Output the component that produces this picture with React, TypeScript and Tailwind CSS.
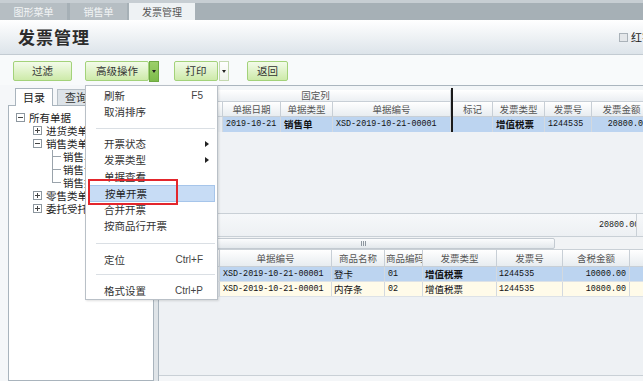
import React from "react";

const CJK = "font-['Noto_Sans_CJK_SC',sans-serif]";
const MONO = "font-['Liberation_Mono',monospace] text-[8.4px]";
const TXT = "text-[9.5px]";

function TreeBox({ plus }: { plus?: boolean }) {
  return (
    <span className="relative inline-flex w-[9px] h-[9px] shrink-0 border border-[#8d979f] bg-white items-center justify-center">
      <span className="w-[5px] h-px bg-[#444]" />
      {plus && <span className="absolute left-[3px] top-[1px] w-px h-[5px] bg-[#444]" />}
    </span>
  );
}

function Btn({ label, w }: { label: string; w: string }) {
  return (
    <div
      className={`${w} h-[20px] flex items-center justify-center border border-[#a3d27a] bg-gradient-to-b from-[#f3fbe9] to-[#cdeaa9] text-[10.5px] text-[#333] rounded-[2px]`}
    >
      {label}
    </div>
  );
}

function MenuItem({
  label,
  right,
  arrow,
  h = "h-[16px]",
}: {
  label: string;
  right?: string;
  arrow?: boolean;
  h?: string;
}) {
  return (
    <div className={`${h} flex items-center pl-[18px] pr-[14px] text-[10.5px] text-[#333]`}>
      <span className="flex-1">{label}</span>
      {right && <span className="font-['Liberation_Sans',sans-serif] text-[10px] text-[#444]">{right}</span>}
      {arrow && (
        <span className="mr-[-6px] w-0 h-0 border-y-[3px] border-y-transparent border-l-[4px] border-l-[#222]" />
      )}
    </div>
  );
}

function Sep({ h }: { h: string }) {
  return (
    <div className={`${h} flex items-center pl-[10px] pr-[2px]`}>
      <div className="h-px w-full bg-[#dadfe4]" />
    </div>
  );
}

const HC =
  "h-full flex items-center justify-center border-r border-b border-[#c8cfd6] text-[9.5px] text-[#555] whitespace-nowrap overflow-hidden";
const DC = "h-full flex items-center border-r border-[#d3d9df] text-[#111] whitespace-nowrap overflow-hidden";

export default function App() {
  return (
    <div className={`relative w-[643px] h-[381px] overflow-hidden bg-[#f5f7f9] ${CJK}`}>
      {/* top tab bar */}
      <div className="h-[20px] flex items-end bg-[#a6b0b6] border-t-[3px] border-[#c7ced3]">
        <div className="w-[67px] h-[17px] flex items-center justify-center bg-[#b6bec3] text-[10px] text-[#f2f4f5]">
          图形菜单
        </div>
        <div className="w-[57px] h-[17px] ml-[3px] flex items-center justify-center bg-[#b6bec3] text-[10px] text-[#f2f4f5]">
          销售单
        </div>
        <div className="w-[66px] h-[17px] ml-[2px] flex items-center justify-center bg-[#eef2f4] text-[10px] text-[#555]">
          发票管理
        </div>
      </div>

      {/* header */}
      <div className="h-[35px] flex items-center bg-gradient-to-b from-[#ffffff] to-[#dde4ea] border-b border-[#c3cbd2] pl-[18px]">
        <div className="flex-1 text-[17px] font-bold text-[#2d2d2d] tracking-[1px]">发票管理</div>
        <div className="flex items-center gap-[3px] mr-[-10px]">
          <span className="w-[9px] h-[9px] border border-[#aab2b9] bg-[#e4e7ea]" />
          <span className="text-[11px] text-[#222]">红字</span>
        </div>
      </div>

      {/* toolbar */}
      <div className="h-[30px] flex items-start pt-[6px] pl-[13px] bg-[#f8fafb]">
        <Btn label="过滤" w="w-[59px]" />
        <div className="ml-[13px] flex">
          <Btn label="高级操作" w="w-[64px]" />
          <div className="w-[10px] h-[21px] flex items-center justify-center bg-gradient-to-b from-[#9ccf6b] to-[#7dbb4a] border border-[#6ea942]">
            <span className="w-0 h-0 border-x-[2.5px] border-x-transparent border-t-[3px] border-t-[#222]" />
          </div>
        </div>
        <div className="ml-[15px] flex">
          <Btn label="打印" w="w-[44px]" />
          <div className="w-[10px] h-[20px] ml-[1px] flex items-center justify-center bg-gradient-to-b from-[#ffffff] to-[#eef3ea] border border-[#c4d9b0]">
            <span className="w-0 h-0 border-x-[2.5px] border-x-transparent border-t-[3px] border-t-[#222]" />
          </div>
        </div>
        <div className="ml-[18px]">
          <Btn label="返回" w="w-[41px]" />
        </div>
      </div>

      {/* main */}
      <div className="h-[296px] flex pl-[8px]">
        {/* left panel */}
        <div className="w-[146px] flex flex-col pt-[2px]">
          <div className="h-[18px] flex items-end pl-[7px]">
            <div className="w-[38px] h-[18px] flex items-center justify-center bg-white border-t border-x border-[#a9b4bd] text-[11px] text-[#222] mb-[-1px] z-10">
              目录
            </div>
            <div className="w-[38px] h-[16px] ml-[4px] flex items-center justify-center bg-[#dde3e8] border-t border-x border-[#b7c0c7] text-[11px] text-[#333]">
              查询
            </div>
          </div>
          <div className="flex-1 bg-white border border-[#a9b4bd] pt-[5px] text-[10.5px] text-[#222]">
            <div className="h-[13px] flex items-center pl-[7px] gap-[4px]">
              <TreeBox />
              <span>所有单据</span>
            </div>
            <div className="h-[13px] flex items-center pl-[24px] gap-[4px]">
              <TreeBox plus />
              <span>进货类单</span>
            </div>
            <div className="h-[13px] flex items-center pl-[24px] gap-[4px]">
              <TreeBox />
              <span>销售类单</span>
            </div>
            {["销售单", "销售订单", "销售报价单"].map((t, i) => (
              <div key={t} className="h-[13px] flex items-center pl-[43px]">
                <span className="relative w-[10px] h-full">
                  <span className={`absolute left-0 top-0 w-px bg-[#9aa3ab] ${i === 2 ? "h-[7px]" : "h-full"}`} />
                  <span className="absolute left-0 top-[6px] w-[9px] h-px bg-[#9aa3ab]" />
                </span>
                <span className="ml-[1px]">{t}</span>
              </div>
            ))}
            <div className="h-[13px] flex items-center pl-[24px] gap-[4px]">
              <TreeBox plus />
              <span>零售类单</span>
            </div>
            <div className="h-[13px] flex items-center pl-[24px] gap-[4px]">
              <TreeBox plus />
              <span>委托受托单</span>
            </div>
          </div>
        </div>

        {/* splitter */}
        <div className="w-[4px] bg-[#dfe4e8]" />

        {/* right grids */}
        <div className="flex-1 flex flex-col bg-[#eef1f4] border-l border-t border-[#aab5be] overflow-hidden">
          {/* top grid */}
          <div className="flex">
            <div className="w-[292px] shrink-0 flex flex-col">
              <div className="h-[4px] bg-[#f3f6f8]" />
              <div className="h-[12px] flex bg-gradient-to-b from-[#ffffff] to-[#eaeef2]">
                <div className={`${HC} w-[22px]`} />
                <div className={`${HC} w-[270px]`}>固定列</div>
              </div>
              <div className="h-[15px] flex bg-gradient-to-b from-[#ffffff] to-[#e6ebef]">
                <div className={`${HC} w-[22px]`} />
                <div className={`${HC} w-[42px]`} />
                <div className={`${HC} w-[58px]`}>单据日期</div>
                <div className={`${HC} w-[52px]`}>单据类型</div>
                <div className={`${HC} w-[118px]`}>单据编号</div>
              </div>
              <div className="h-[15px] flex">
                <div className={`${DC} w-[64px] bg-[#e9edf1]`} />
                <div className={`${DC} w-[58px] bg-[#bcd4f0] pl-[3px] ${MONO}`}>2019-10-21</div>
                <div className={`${DC} w-[52px] bg-[#bcd4f0] pl-[3px] font-bold ${TXT}`}>销售单</div>
                <div className={`${DC} w-[118px] bg-[#bcd4f0] pl-[3px] ${MONO}`}>XSD-2019-10-21-00001</div>
              </div>
            </div>
            <div className="w-[2px] shrink-0 mt-[2px] h-[44px] bg-[#1a1a1a]" />
            <div className="w-[220px] shrink-0 flex flex-col">
              <div className="h-[4px] bg-[#f3f6f8]" />
              <div className="h-[12px] bg-gradient-to-b from-[#ffffff] to-[#eaeef2] border-b border-[#c8cfd6]" />
              <div className="h-[15px] flex bg-gradient-to-b from-[#ffffff] to-[#e6ebef]">
                <div className={`${HC} w-[40px]`}>标记</div>
                <div className={`${HC} w-[52px]`}>发票类型</div>
                <div className={`${HC} w-[47px]`}>发票号</div>
                <div className={`${HC} w-[60px]`}>发票金额</div>
                <div className={`${HC} w-[21px]`} />
              </div>
              <div className="h-[15px] flex bg-[#bcd4f0]">
                <div className={`${DC} w-[40px]`} />
                <div className={`${DC} w-[52px] pl-[3px] font-bold ${TXT}`}>增值税票</div>
                <div className={`${DC} w-[47px] pl-[3px] ${MONO}`}>1244535</div>
                <div className={`${DC} w-[60px] justify-end pr-[3px] ${MONO}`}>20800.00</div>
                <div className={`${DC} w-[21px]`} />
              </div>
            </div>
          </div>
          <div className="h-[81px] bg-[#eff2f5]" />

          {/* summary */}
          <div className="h-[24px] flex items-center bg-gradient-to-b from-[#f6f8fa] to-[#edf0f3] border-y border-[#c9d0d6]">
            <div className="w-[440px] shrink-0" />
            <div className={`w-[38px] shrink-0 h-full flex items-center overflow-hidden whitespace-nowrap border-r border-[#c9d0d6] text-[#222] ${MONO}`}>
              20800.00
            </div>
          </div>

          {/* scrollbar */}
          <div className="h-[13px] flex items-center bg-[#f1f3f5] border-b border-[#c9d0d6]">
            <div className="ml-[12px] w-[384px] h-[11px] flex items-center justify-center rounded-[2px] border border-[#c3cad1] bg-gradient-to-b from-[#fbfcfd] to-[#e3e8ec]">
              <div className="flex gap-[1px]">
                <span className="w-px h-[5px] bg-[#8e979f]" />
                <span className="w-px h-[5px] bg-[#8e979f]" />
                <span className="w-px h-[5px] bg-[#8e979f]" />
              </div>
            </div>
          </div>

          {/* bottom grid */}
          <div className="h-[17px] flex shrink-0 bg-gradient-to-b from-[#ffffff] to-[#e6ebef]">
            <div className={`${HC} w-[61px] shrink-0`} />
            <div className={`${HC} w-[112px] shrink-0`}>单据编号</div>
            <div className={`${HC} w-[53px] shrink-0`}>商品名称</div>
            <div className={`${HC} w-[38px] shrink-0 justify-start pl-[1px]`}>商品编码</div>
            <div className={`${HC} w-[74px] shrink-0`}>发票类型</div>
            <div className={`${HC} w-[66px] shrink-0`}>发票号</div>
            <div className={`${HC} w-[67px] shrink-0`}>含税金额</div>
            <div className={`${HC} w-[40px] shrink-0`} />
          </div>
          {[
            { bg: "bg-[#bcd4f0]", name: "登卡", code: "01", amt: "10000.00", bold: true },
            { bg: "bg-[#fffbe9]", name: "内存条", code: "02", amt: "10800.00", bold: false },
          ].map((r) => (
            <div key={r.code} className={`h-[15px] flex shrink-0 border-b border-[#dde2e7] ${r.bg}`}>
              <div className={`${DC} w-[61px] shrink-0 bg-[#e9edf1]`} />
              <div className={`${DC} w-[112px] shrink-0 pl-[3px] ${MONO}`}>XSD-2019-10-21-00001</div>
              <div className={`${DC} w-[53px] shrink-0 pl-[2px] ${TXT}`}>{r.name}</div>
              <div className={`${DC} w-[38px] shrink-0 pl-[3px] ${MONO}`}>{r.code}</div>
              <div className={`${DC} w-[74px] shrink-0 pl-[2px] ${TXT} ${r.bold ? "font-bold" : ""}`}>增值税票</div>
              <div className={`${DC} w-[66px] shrink-0 pl-[2px] ${MONO}`}>1244535</div>
              <div className={`${DC} w-[67px] shrink-0 justify-end pr-[3px] ${MONO}`}>{r.amt}</div>
              <div className={`${DC} w-[40px] shrink-0`} />
            </div>
          ))}
          <div className="h-[79px] shrink-0 bg-[#eef1f4] border-b border-[#c9d0d6]" />
          <div className="flex-1 bg-[#f4f6f8]" />
        </div>
      </div>

      {/* dropdown menu overlay */}
      <div className="absolute left-[85px] top-[85px] w-[133px] h-[215px] bg-white border border-[#b9c0c7] shadow-[1px_1px_2px_rgba(0,0,0,0.12)] flex flex-col">
        <div className="h-[1px]" />
        <MenuItem label="刷新" right="F5" h="h-[17px]" />
        <MenuItem label="取消排序" h="h-[16px]" />
        <Sep h="h-[16px]" />
        <MenuItem label="开票状态" arrow />
        <MenuItem label="发票类型" arrow />
        <MenuItem label="单据查看" h="h-[17px]" />
        <div className="h-[17px] mx-[2px] flex items-center pl-[16px] bg-[#c7dcf5] border border-[#a6c5ea] text-[10.5px] text-[#222]">
          按单开票
        </div>
        <MenuItem label="合并开票" />
        <MenuItem label="按商品行开票" />
        <Sep h="h-[18px]" />
        <MenuItem label="定位" right="Ctrl+F" h="h-[15px]" />
        <Sep h="h-[15px]" />
        <MenuItem label="格式设置" right="Ctrl+P" h="h-[17px]" />
        {/* red highlight box */}
        <div className="absolute left-[2px] top-[93px] w-[90px] h-[26px] border-2 border-[#e3262c]" />
      </div>
    </div>
  );
}
